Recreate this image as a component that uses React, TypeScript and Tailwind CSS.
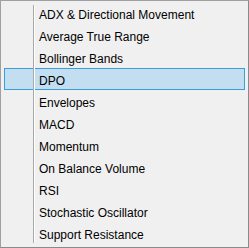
const items = [
  "ADX & Directional Movement",
  "Average True Range",
  "Bollinger Bands",
  "DPO",
  "Envelopes",
  "MACD",
  "Momentum",
  "On Balance Volume",
  "RSI",
  "Stochastic Oscillator",
  "Support Resistance",
];

const selected = "DPO";

export default function App() {
  return (
    <div className="w-[249px] h-[248px] bg-[#f0f0f0] overflow-hidden">
      <div
        className="relative w-[249px] h-[248px] border border-[#a0a0a0] border-r-[#8a8a8a] border-b-[#8a8a8a] bg-[#f0f0f0] px-[3px] pt-[1px] text-[12px] text-black"
        style={{ fontFamily: '"Segoe UI", "Liberation Sans", Arial, sans-serif' }}
      >
        <ul>
          {items.map((label) => (
            <li
              key={label}
              className={
                label === selected
                  ? "h-[22px] flex items-center border border-[#3a9fd6] bg-[#c3def0] pl-[34px] pt-[4px]"
                  : "h-[22px] flex items-center border border-transparent pl-[34px] pt-[4px]"
              }
            >
              {label}
            </li>
          ))}
        </ul>
        {/* gutter separator, drawn over the highlighted row */}
        <div className="absolute left-[32px] top-[4px] z-10 h-[238px] w-px bg-[#a9a9a9]" />
        <div className="absolute left-[33px] top-[4px] z-10 h-[238px] w-px bg-white" />
      </div>
    </div>
  );
}
